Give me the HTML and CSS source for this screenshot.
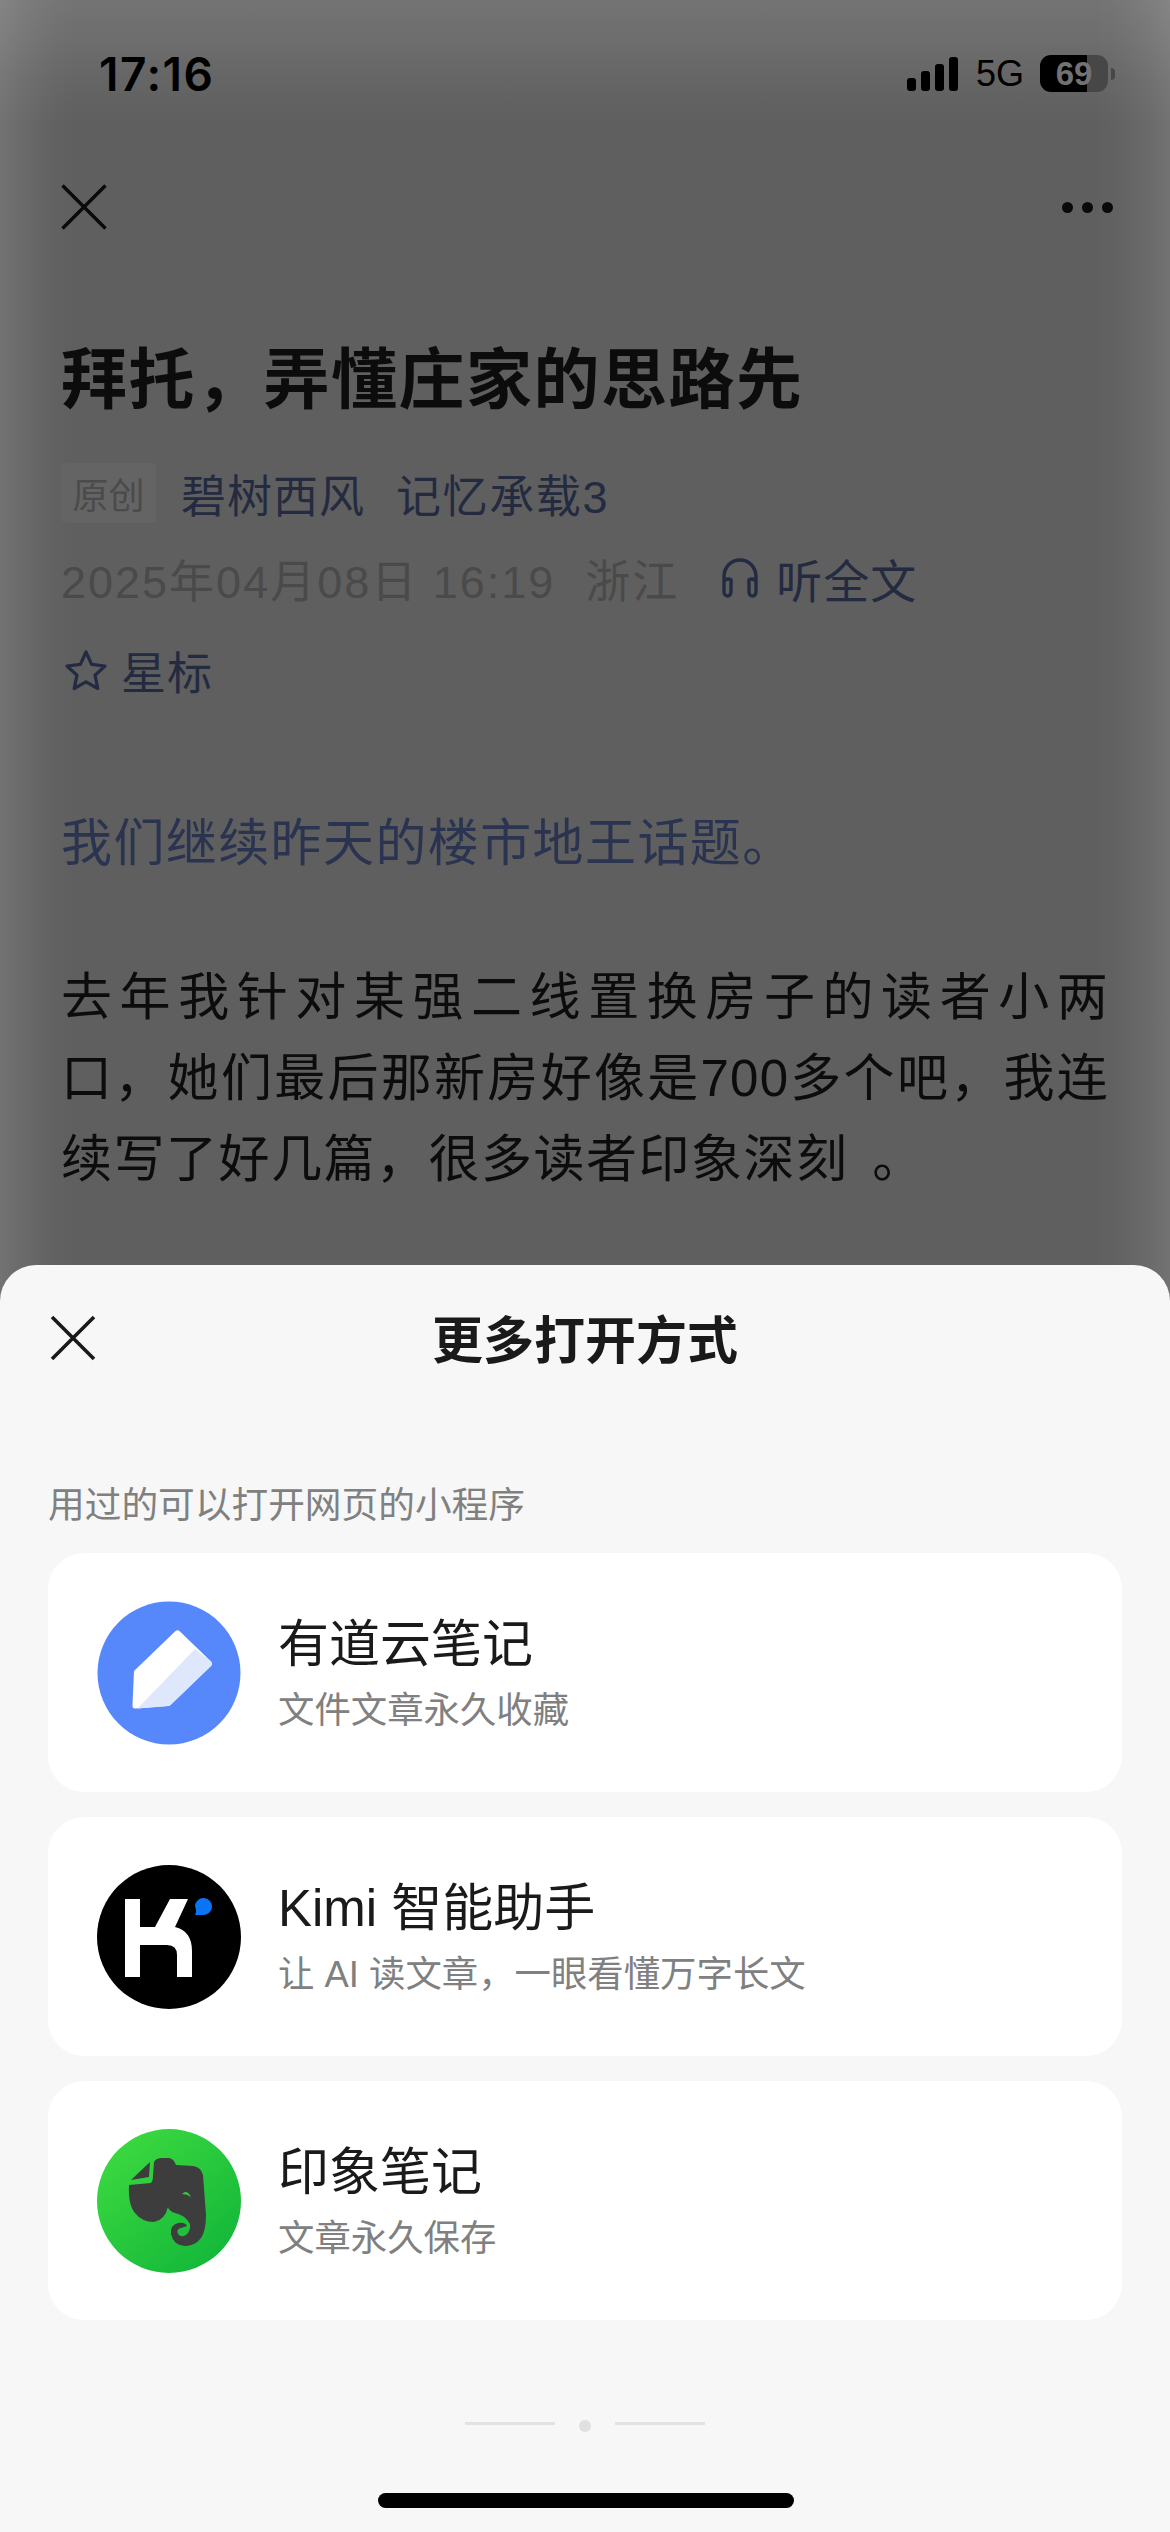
FILE: index.html
```html
<!DOCTYPE html>
<html lang="zh">
<head>
<meta charset="utf-8">
<title>更多打开方式</title>
<link rel="stylesheet" href="styles.css">
</head>
<body>
<div class="screen">
  <header class="status">
    <span class="time">17:16</span>
    <div class="status-right">
      <div class="signal"><i class="b1"></i><i class="b2"></i><i class="b3"></i><i class="b4"></i></div>
      <span class="net">5G</span>
      <div class="battery"><span>69</span></div>
      <i class="nub"></i>
    </div>
  </header>
  <nav class="nav">
    <svg class="nav-x" viewBox="0 0 46 46" width="46" height="46"><path d="M1.500 1.500L44.500 44.500M44.500 1.500L1.500 44.500" fill="none" stroke="#0a0a0a" stroke-width="3.400"/></svg>
    <div class="dots"><i></i><i></i><i></i></div>
  </nav>
  <article class="article">
    <h1 class="title">拜托，弄懂庄家的思路先</h1>
    <div class="byline"><span class="tag">原创</span><span class="link">碧树西风</span><span class="link">记忆承载3</span></div>
    <div class="meta">
      <span class="date">2025年04月08日 16:19</span><span class="date region">浙江</span>
      <svg class="phones" viewBox="0 0 42 42" width="42" height="42"><path d="M5 26V20C5 10 12 3 21 3S37 10 37 20V26M5 26C5 23 7 22 10 22S12 24 12 26V34C12 37 11 39 8.500 39S5 37 5 34ZM37 26C37 23 35 22 32 22S30 24 30 26V34C30 37 31 39 33.500 39S37 37 37 34Z" fill="none" stroke="#232b42" stroke-width="3.400"/></svg>
      <span class="link listen">听全文</span>
    </div>
    <div class="star-row">
      <svg class="star" viewBox="0 0 44 42" width="44" height="42"><path d="M22 3L27.600 15.400L41 17L31 26.200L33.800 39.500L22 32.800L10.200 39.500L13 26.200L3 17L16.400 15.400Z" fill="none" stroke="#232b42" stroke-width="3.200" stroke-linejoin="round"/></svg>
      <span class="link">星标</span>
    </div>
    <p class="lead">我们继续昨天的楼市地王话题。</p>
    <p class="body-text"><span class="line">去年我针对某强二线置换房子的读者小两</span><span class="line">口，她们最后那新房好像是700多个吧，我连</span><span class="line last">续写了好几篇，很多读者印象深刻 。</span></p>
  </article>

  <section class="sheet">
    <div class="sheet-head">
      <svg class="sheet-x" viewBox="0 0 46 46" width="46" height="46"><path d="M2 2L44 44M44 2L2 44" fill="none" stroke="#1a1a1a" stroke-width="3.600"/></svg>
      <h2 class="sheet-title">更多打开方式</h2>
    </div>
    <p class="sheet-sub">用过的可以打开网页的小程序</p>
    <div class="cards">
      <div class="card">
        <svg class="app" viewBox="0 0 144 144" width="144" height="144">
          <circle cx="72" cy="72" r="71.500" fill="#5688fb"/>
          <path d="M37 70L78 30.500Q80.500 28 83 30.500L114 60.500Q116 63 114 65L74.500 103Q73 105 71 105L39 107.500Q35 108 35.500 104Z" fill="#fff"/>
          <path d="M41 107L98 48L114 60.500Q116 63 114 65L74.500 103Q73 105 71 105L41 107.500Z" fill="#dfe7fc"/>
        </svg>
        <div class="card-text"><div class="card-title">有道云笔记</div><div class="card-desc">文件文章永久收藏</div></div>
      </div>
      <div class="card">
        <svg class="app" viewBox="0 0 144 144" width="144" height="144">
          <circle cx="72" cy="72" r="72" fill="#000"/>
          <path d="M28 34H43V62H58L73 34H91L78 62Q95 66 95 86V112H80V90Q80 80 70 80H43V112H28Z" fill="#fff"/>
          <path d="M98 41A8.500 8.500 0 1 1 106.500 50H98Q100 46 98 41Z" fill="#0b74f5"/>
        </svg>
        <div class="card-text"><div class="card-title">Kimi 智能助手</div><div class="card-desc">让 AI 读文章，一眼看懂万字长文</div></div>
      </div>
      <div class="card">
        <svg class="app" viewBox="0 0 144 144" width="144" height="144">
          <defs><linearGradient id="ev" x1="0.150" y1="0.100" x2="0.850" y2="0.900"><stop offset="0" stop-color="#3bd83f"/><stop offset="1" stop-color="#14b83a"/></linearGradient></defs>
          <circle cx="72" cy="72" r="72" fill="url(#ev)"/>
          <path d="M53 33L52 48L34 51Z" fill="#3d3d3d"/>
          <path d="M56 47L57 33Q59 29 65 29H72Q77 30 79 36L96 37Q104 38 106 46L109 86Q109 102 104 109Q98 117 88 117Q76 116 74 105Q73 96 81 94Q88 93 90 97L84 99Q79 100 81 105Q84 109 89 106Q94 102 93 95Q88 86 78 84Q72 82 71 78Q68 91 57 93Q45 93 38 84Q31 76 32 56L54 54Q56 52 56 47Z" fill="#3d3d3d"/>
          <path d="M85 65Q90 60 94 68Q90 65 85 65Z" fill="#3bc440"/>
        </svg>
        <div class="card-text"><div class="card-title">印象笔记</div><div class="card-desc">文章永久保存</div></div>
      </div>
    </div>
    <div class="divider"><i class="rule"></i><i class="dot"></i><i class="rule"></i></div>
    <div class="home"></div>
  </section>
</div>
</body>
</html>
```
FILE: styles.css
```css
* { box-sizing: border-box; margin: 0; padding: 0; }
html, body { width: 1170px; height: 2532px; overflow: hidden; }
body { font-family: "Liberation Sans", "Noto Sans CJK SC", sans-serif; background: #5f5f5f; }
i { display: block; }
.screen {
  position: relative; width: 1170px; height: 2532px; overflow: hidden;
  background:
    linear-gradient(180deg, rgba(255,255,255,.13) 0, rgba(255,255,255,.09) 40px, rgba(255,255,255,.04) 80px, rgba(255,255,255,0) 125px),
    linear-gradient(90deg, rgba(255,255,255,.12) 0, rgba(255,255,255,.07) 22px, rgba(255,255,255,.025) 50px, rgba(255,255,255,0) 75px),
    linear-gradient(270deg, rgba(255,255,255,.12) 0, rgba(255,255,255,.07) 22px, rgba(255,255,255,.025) 50px, rgba(255,255,255,0) 75px),
    #5f5f5f;
}
.status { display: flex; justify-content: space-between; align-items: center; height: 37px; margin-top: 55px; padding: 0 55px 0 99px; }
.time { font-family: "Inter", "Liberation Sans", sans-serif; font-size: 46px; font-weight: 600; color: #000; letter-spacing: 1.500px; }
.status-right { display: flex; align-items: center; }
.signal { display: flex; align-items: flex-end; gap: 5px; height: 34px; margin-right: 18px; }
.signal i { width: 9px; background: #000; border-radius: 3px; }
.b1 { height: 13px; } .b2 { height: 20px; } .b3 { height: 27px; } .b4 { height: 34px; }
.net { font-size: 36px; color: #000; margin-right: 16px; }
.battery { width: 68px; height: 37px; border-radius: 11px; background: linear-gradient(90deg, #000 69%, #474747 69%); display: flex; align-items: center; justify-content: center; }
.battery span { font-size: 33px; font-weight: 700; color: #727272; }
.nub { width: 4px; height: 12px; margin-left: 3px; background: #474747; border-radius: 0 6px 6px 0; }
.nav { display: flex; justify-content: space-between; align-items: center; height: 46px; margin-top: 92px; padding: 0 57px 0 61px; }
.dots { display: flex; gap: 9px; }
.dots i { width: 11px; height: 11px; border-radius: 50%; background: #0a0a0a; }
.article { padding: 0 61px; }
.title { font-size: 66px; font-weight: 700; line-height: 90px; letter-spacing: 1.500px; color: #0c0c0c; margin-top: 105px; }
.byline { display: flex; align-items: center; margin-top: 38px; height: 60px; }
.tag { width: 95px; height: 60px; background: #646464; border-radius: 4px; color: #4b4b4b; font-size: 36px; display: flex; align-items: center; justify-content: center; margin-right: 25px; }
.link { color: #242b40; font-size: 45px; letter-spacing: 1px; }
.byline .link + .link { margin-left: 31px; }
.byline .link:last-child { letter-spacing: 1.600px; }
.meta { display: flex; align-items: center; height: 60px; margin-top: 25px; }
.date { color: #4a4a4a; font-size: 45px; letter-spacing: 2px; white-space: nowrap; }
.region { margin-left: 30px; }
.phones { margin-left: 40px; margin-right: 15px; }
.listen { font-size: 46px; }
.star-row { display: flex; align-items: center; height: 60px; margin-top: 32px; padding-left: 3px; }
.star { margin-right: 13px; }
.lead { color: #2a3350; font-size: 51px; line-height: 81px; letter-spacing: 1.400px; margin-top: 103px; }
.body-text { color: #0c0c0c; font-size: 51px; line-height: 81px; letter-spacing: 1.200px; margin-top: 73px; }
.line { display: block; text-align: justify; text-align-last: justify; white-space: nowrap; }
.line.last { text-align-last: left; letter-spacing: 1.500px; word-spacing: 8px; }
.sheet { position: absolute; left: 0; right: 0; top: 1265px; bottom: 0; background: #f7f7f7; border-radius: 36px 36px 0 0; padding: 0 48px; }
.sheet-head { position: relative; display: flex; justify-content: center; align-items: center; height: 144px; }
.sheet-x { position: absolute; left: 2px; top: 50px; }
.sheet-title { font-size: 51px; font-weight: 600; color: #1a1a1a; }
.sheet-sub { font-size: 36.700px; color: #808080; line-height: 50px; margin-top: 72px; }
.cards { display: flex; flex-direction: column; gap: 25px; margin-top: 22px; }
.card { display: flex; align-items: center; height: 239px; background: #fff; border-radius: 36px; padding-left: 49px; }
.app { flex: none; margin-right: 37px; }
.card-title { font-size: 51px; color: #1a1a1a; line-height: 70px; }
.card-desc { font-size: 36.400px; color: #808080; line-height: 50px; margin-top: 6px; }
.divider { display: flex; justify-content: center; align-items: flex-start; gap: 24px; margin-top: 102px; }
.rule { width: 90px; height: 3px; background: #e2e2e2; }
.dot { width: 12px; height: 12px; border-radius: 50%; background: #e0e0e0; margin-top: -2px; }
.home { position: absolute; left: 378px; top: 1228px; width: 416px; height: 15px; border-radius: 8px; background: #000; }
```
